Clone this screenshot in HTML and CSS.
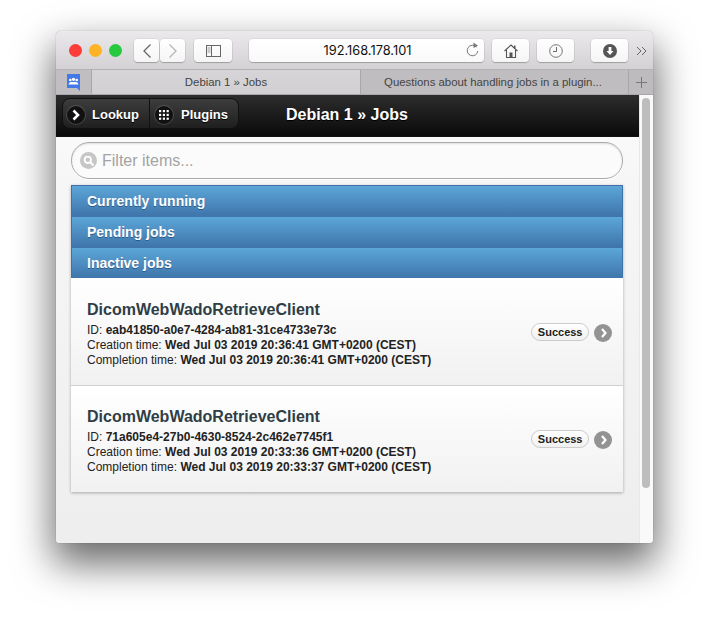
FILE: index.html
```html
<!DOCTYPE html>
<html lang="en">
<head>
<meta charset="utf-8">
<title>Debian 1 » Jobs</title>
<link rel="stylesheet" href="styles.css">
</head>
<body>
<div class="window">
  <div class="toolbar">
    <div class="lights"><i class="light red"></i><i class="light yellow"></i><i class="light green"></i></div>
    <div class="nav">
      <span class="tbtn back"><svg width="10" height="16" viewBox="0 0 10 16"><path d="M8.500 1.500 2 8l6.500 6.500" fill="none" stroke="#666" stroke-width="1.300"/></svg></span>
      <span class="tbtn fwd"><svg width="10" height="16" viewBox="0 0 10 16"><path d="M1.500 1.500 8 8l-6.500 6.500" fill="none" stroke="#b5b5b5" stroke-width="1.300"/></svg></span>
    </div>
    <span class="tbtn side"><svg width="15" height="12" viewBox="0 0 15 12"><rect x=".5" y=".5" width="14" height="11" fill="none" stroke="#666"/><path d="M5.500 .5v11" stroke="#666"/><path d="M1.500 3h3M1.500 5h3M1.500 7h3" stroke="#999"/></svg></span>
    <div class="url"><span class="url-text">192.168.178.101</span>
      <svg class="reload" width="13" height="15" viewBox="0 0 13 15"><path d="M10.500 5A5.300 5.300 0 1 0 11.800 9" fill="none" stroke="#777" stroke-width="1"/><path d="M7.500 .5 12 3.800 7.500 6z" fill="#777"/></svg>
    </div>
    <span class="tbtn home"><svg width="14" height="14" viewBox="0 0 14 14"><path d="M.5 7 7 1l6.500 6M2.500 6v7.500h9V6" fill="none" stroke="#555" stroke-width="1.100"/><rect x="5.500" y="8.500" width="3" height="5" fill="#555"/><rect x="10" y="1.500" width="1.500" height="3" fill="#555"/></svg></span>
    <span class="tbtn hist"><svg width="14" height="14" viewBox="0 0 14 14"><circle cx="7" cy="7" r="6.300" fill="none" stroke="#777"/><path d="M7.500 3v4.500H4" fill="none" stroke="#666"/></svg></span>
    <span class="tbtn dl"><svg width="14" height="14" viewBox="0 0 14 14"><circle cx="7" cy="7" r="7" fill="#555"/><path d="M5.600 3h2.800v4h2.100L7 11 3.500 7h2.100z" fill="#fff"/></svg></span>
    <svg class="more" width="11" height="10" viewBox="0 0 11 10"><path d="M1 1l4 4-4 4M6 1l4 4-4 4" fill="none" stroke="#666"/></svg>
  </div>
  <div class="tabs">
    <div class="fav"><svg width="13" height="17" viewBox="0 0 13 17"><path d="M0 0h13v17l-3-3H0z" fill="#4479e8"/><circle cx="3.300" cy="6" r="1.300" fill="#fff"/><circle cx="9.700" cy="6" r="1.300" fill="#fff"/><circle cx="6.500" cy="5.300" r="1.600" fill="#fff"/><path d="M1.500 10.500q.5-2.500 2.500-2.500h5q2 0 2.500 2.500z" fill="#fff"/></svg></div>
    <div class="tab active">Debian 1 » Jobs</div>
    <div class="tab inactive">Questions about handling jobs in a plugin...</div>
    <div class="plus"><svg width="11" height="11" viewBox="0 0 11 11"><path d="M5.500 0v11M0 5.500h11" stroke="#777"/></svg></div>
  </div>
  <div class="content">
    <div class="page">
      <header class="bar">
        <div class="group">
          <a class="gbtn lookup"><span class="gicon"><svg width="10" height="12" viewBox="0 0 10 12"><path d="M2.500 1.500 7 6l-4.500 4.500" fill="none" stroke="#fff" stroke-width="2.600"/></svg></span>Lookup</a>
          <a class="gbtn plugins"><span class="gicon"><svg width="10" height="10" viewBox="0 0 10 10"><g fill="#fff"><rect width="2.200" height="2.200"/><rect x="3.800" width="2.200" height="2.200"/><rect x="7.600" width="2.200" height="2.200"/><rect y="3.800" width="2.200" height="2.200"/><rect x="3.800" y="3.800" width="2.200" height="2.200"/><rect x="7.600" y="3.800" width="2.200" height="2.200"/><rect y="7.600" width="2.200" height="2.200"/><rect x="3.800" y="7.600" width="2.200" height="2.200"/><rect x="7.600" y="7.600" width="2.200" height="2.200"/></g></svg></span>Plugins</a>
        </div>
        <h1 class="title">Debian 1 » Jobs</h1>
      </header>
      <main class="main">
        <div class="search">
          <svg class="search-icon" width="17" height="17" viewBox="0 0 17 17"><circle cx="8.500" cy="8.500" r="8.500" fill="#c6c6c6"/><circle cx="7.800" cy="7.800" r="3.200" fill="none" stroke="#fff" stroke-width="1.800"/><path d="M10.200 10.200l3.300 3.300" stroke="#fff" stroke-width="2.200"/></svg>
          <span class="placeholder">Filter items...</span>
        </div>
        <div class="list">
          <div class="divider">Currently running</div>
          <div class="divider">Pending jobs</div>
          <div class="divider">Inactive jobs</div>
          <div class="job">
            <div class="job-text">
              <h3>DicomWebWadoRetrieveClient</h3>
              <p>ID: <b>eab41850-a0e7-4284-ab81-31ce4733e73c</b></p>
              <p>Creation time: <b>Wed Jul 03 2019 20:36:41 GMT+0200 (CEST)</b></p>
              <p>Completion time: <b>Wed Jul 03 2019 20:36:41 GMT+0200 (CEST)</b></p>
            </div>
            <span class="badge">Success</span>
            <span class="arrow"><svg width="8" height="10" viewBox="0 0 8 10"><path d="M2 1l3.500 4L2 9" fill="none" stroke="#fff" stroke-width="2.200"/></svg></span>
          </div>
          <div class="job">
            <div class="job-text">
              <h3>DicomWebWadoRetrieveClient</h3>
              <p>ID: <b>71a605e4-27b0-4630-8524-2c462e7745f1</b></p>
              <p>Creation time: <b>Wed Jul 03 2019 20:33:36 GMT+0200 (CEST)</b></p>
              <p>Completion time: <b>Wed Jul 03 2019 20:33:37 GMT+0200 (CEST)</b></p>
            </div>
            <span class="badge">Success</span>
            <span class="arrow"><svg width="8" height="10" viewBox="0 0 8 10"><path d="M2 1l3.500 4L2 9" fill="none" stroke="#fff" stroke-width="2.200"/></svg></span>
          </div>
        </div>
      </main>
    </div>
    <div class="scrollbar"><div class="thumb"></div></div>
  </div>
</div>
</body>
</html>
```
FILE: styles.css
```css
html, body { margin: 0; height: 100%; }
body {
  width: 709px;
  height: 623px;
  padding: 31px 0 0 56px;
  box-sizing: border-box;
  overflow: hidden;
  background: #fff;
  font-family: "Liberation Sans", Arial, sans-serif;
}
.window {
  width: 597px;
  height: 512px;
  border-radius: 5px 5px 4px 4px;
  overflow: hidden;
  display: flex;
  flex-direction: column;
  box-shadow: 0 0 1px rgba(0,0,0,.45), 0 18px 38px 3px rgba(0,0,0,.58);
  background: #eee;
}
.toolbar {
  height: 37px;
  padding-top: 1px;
  flex: none;
  display: flex;
  align-items: center;
  background: linear-gradient(#ebe9eb, #d3d1d3);
  border-bottom: 1px solid #b4b2b4;
  position: relative;
}
.lights { display: flex; gap: 7px; margin-left: 13px; width: 65px; }
.light { width: 13px; height: 13px; border-radius: 50%; display: block; }
.red { background: #fc3d39; }
.yellow { background: #fdb325; }
.green { background: #27c93f; }
.tbtn {
  height: 23px;
  display: flex;
  align-items: center;
  justify-content: center;
  background: linear-gradient(#fff, #f5f5f5);
  border-radius: 4px;
  box-shadow: 0 1px 1px rgba(0,0,0,.22), 0 0 0 .5px rgba(0,0,0,.1);
  box-sizing: border-box;
}
.nav { display: flex; gap: 1px; }
.back, .fwd { width: 25px; }
.side { width: 38px; margin-left: 9px; }
.url {
  width: 235px;
  height: 23px;
  margin-left: 17px;
  background: linear-gradient(#fff, #f9f9f9);
  border-radius: 4px;
  box-shadow: 0 1px 1px rgba(0,0,0,.22), 0 0 0 .5px rgba(0,0,0,.1);
  display: flex;
  align-items: center;
  justify-content: center;
  position: relative;
}
.url-text { font-size: 12.800px; color: #111; font-family: "Inter", "Liberation Sans", sans-serif; margin-left: 2px; }
.reload { position: absolute; right: 5px; top: 3px; }
.home { width: 37px; margin-left: 8px; }
.hist { width: 37px; margin-left: 8px; }
.dl { width: 37px; margin-left: 17px; }
.more { margin-left: 8px; }
.tabs {
  height: 25px;
  flex: none;
  display: flex;
  background: #bdbbbd;
  border-bottom: 1px solid #a9a7a9;
  box-sizing: border-box;
  font-size: 11.400px;
  color: #444;
}
.fav {
  width: 36px;
  flex: none;
  box-sizing: border-box;
  display: flex;
  align-items: center;
  justify-content: center;
  padding-right: 1px;
  background: #c0bec0;
  border-right: 1px solid #a9a7a9;
}
.tab {
  display: flex;
  align-items: center;
  justify-content: center;
  box-sizing: border-box;
  flex: none;
  padding-bottom: 1px;
}
.active { width: 269px; background: linear-gradient(#d6d4d6, #d2d0d2); border-right: 1px solid #a9a7a9; }
.inactive { width: 268px; background: #bfbdbf; border-right: 1px solid #a9a7a9; padding-right: 3px; }
.plus { flex: 1; display: flex; align-items: center; justify-content: center; }
.content { flex: 1; display: flex; min-height: 0; background: #eee; }
.page { flex: 1; min-width: 0; display: flex; flex-direction: column; }
.bar {
  height: 42px;
  flex: none;
  box-sizing: border-box;
  background: linear-gradient(#2d2d2d, #0a0a0a);
  border-bottom: 1px solid #111;
  display: flex;
  align-items: center;
  padding: 0 0 4px 6px;
}
.group {
  display: flex;
  height: 31px;
  width: 177px;
  border: 1px solid #111;
  border-radius: 8px;
  box-sizing: border-box;
  overflow: hidden;
  background: linear-gradient(#3d3d3d, #1f1f1f);
}
.gbtn {
  display: flex;
  align-items: center;
  color: #fff;
  font-size: 13px;
  font-weight: bold;
  box-sizing: border-box;
  padding-top: 2px;
  text-shadow: 0 1px 0 #000;
}
.lookup { width: 87px; border-right: 1px solid #111; padding-left: 4px; }
.plugins { flex: 1; padding-left: 5px; }
.gicon {
  width: 18px;
  height: 18px;
  border-radius: 50%;
  background: #111;
  box-shadow: 0 0 0 1px rgba(255,255,255,.14);
  display: flex;
  align-items: center;
  justify-content: center;
  margin-right: 7px;
}
.plugins .gicon { margin-right: 8px; }
.title {
  margin: 2px 0 0 47px;
  color: #fff;
  font-size: 16px;
  font-weight: bold;
  line-height: 20px;
  text-shadow: 0 1px 0 #000;
}
.main { flex: 1; padding: 5px 16px 0 15px; background: #eeeeee; background-image: linear-gradient(#fafafa, #f6f6f6 40px, #eeeeee 400px); }
.search {
  height: 37px;
  box-sizing: border-box;
  background: #fbfbfb;
  border: 1px solid #aaa;
  border-radius: 18px;
  box-shadow: inset 0 1px 2px rgba(0,0,0,.12), 0 1px 0 #fff;
  display: flex;
  align-items: center;
  padding-left: 8px;
}
.search-icon { flex: none; margin-right: 5px; }
.placeholder { font-size: 16px; color: #a3a3a3; }
.list {
  margin-top: 6px;
  box-shadow: 0 1px 3px rgba(0,0,0,.3);
}
.divider {
  height: 31px;
  box-sizing: border-box;
  border: 1px solid #3d74a8;
  border-bottom: 0;
  border-top-color: #456dae;
  background: linear-gradient(#5ca6d8, #3f75ab);
  color: #fff;
  font-size: 14px;
  font-weight: bold;
  line-height: 30px;
  padding-left: 15px;
  text-shadow: 0 1px 0 #2c5a85;
}
.divider + .divider { border-top-color: #3f75ab; }
.job {
  height: 107px;
  box-sizing: border-box;
  display: flex;
  align-items: center;
  background: linear-gradient(#fff, #f1f1f1);
  border-top: 1px solid #d0d0d0;
  padding: 0 11px 0 16px;
}
.divider + .job { border-top: 0; }
.job + .job { padding-bottom: 2px; }
.job-text { flex: 1; color: #222; padding-top: 5px; }
.job h3 {
  margin: 0 0 3px;
  font-size: 16px;
  line-height: 20px;
  font-weight: bold;
  color: #2f3e46;
}
.job p { margin: 0; font-size: 12px; line-height: 15px; }
.job p b { color: #222; }
.badge {
  font-size: 11px;
  font-weight: bold;
  color: #222;
  padding: 0 5.500px;
  height: 18px;
  line-height: 17px;
  box-sizing: border-box;
  border: 1px solid #ccc;
  border-radius: 9px;
  background: linear-gradient(#fff, #f0f0f0);
  margin-right: 5px;
  margin-top: 1px;
}
.arrow {
  width: 18px;
  height: 18px;
  border-radius: 50%;
  background: #939393;
  display: flex;
  align-items: center;
  justify-content: center;
  padding-left: 1px;
  box-sizing: border-box;
  margin-top: 2px;
}
.job + .job .arrow { margin-top: 4px; }
.scrollbar {
  width: 14px;
  flex: none;
  background: #f9f9f9;
  border-left: 1px solid #e8e8e8;
  box-sizing: border-box;
  padding: 3px 3px 0 2px;
}
.thumb { height: 390px; border-radius: 4px; background: #bdbdbd; }
```
